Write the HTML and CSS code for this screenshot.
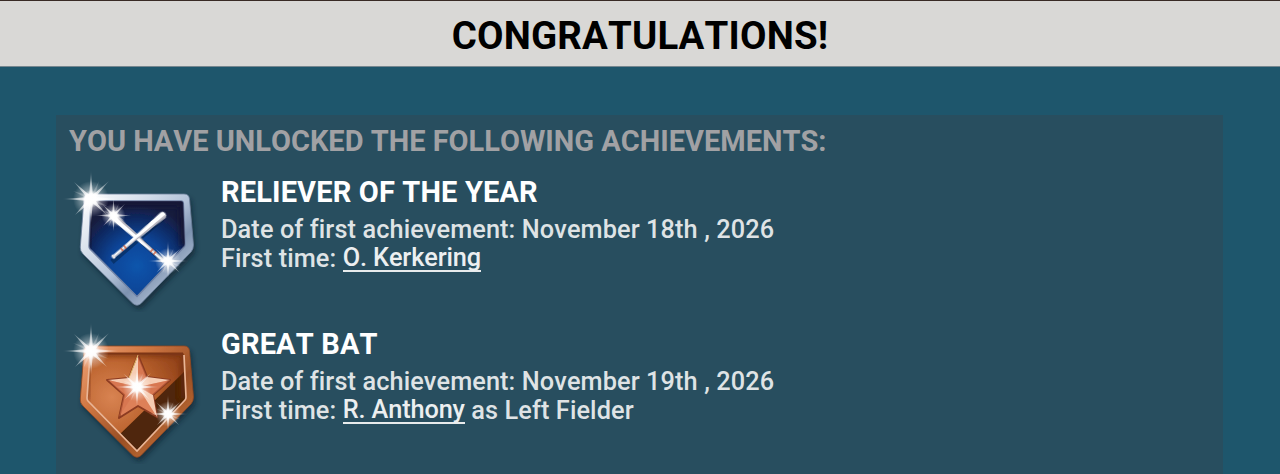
FILE: index.html
```html
<!DOCTYPE html>
<html lang="en">
<head>
    <meta charset="UTF-8">
    <meta name="viewport" content="width=device-width, initial-scale=1.0">
    <title>Congratulations!</title>
    <link rel="stylesheet" href="styles.css">
</head>
<body>

<!-- shapes shared by both badges -->
<svg class="defs" width="0" height="0">
    <defs>
        <linearGradient id="silver" x1="0" y1="0" x2="1" y2="1">
            <stop offset="0" stop-color="#ffffff"/>
            <stop offset=".3" stop-color="#d5deeb"/>
            <stop offset=".5" stop-color="#b3c2d8"/>
            <stop offset=".65" stop-color="#7d92b0"/>
            <stop offset="1" stop-color="#dce6f4"/>
        </linearGradient>
        <radialGradient id="blue" cx=".5" cy=".68" r=".65">
            <stop offset="0" stop-color="#0b55ac"/>
            <stop offset=".45" stop-color="#084496"/>
            <stop offset=".8" stop-color="#10265c"/>
            <stop offset="1" stop-color="#181d3c"/>
        </radialGradient>
        <linearGradient id="copper" x1="0" y1="0" x2="1" y2="1">
            <stop offset="0" stop-color="#f0a47a"/>
            <stop offset=".3" stop-color="#d17843"/>
            <stop offset=".6" stop-color="#9a4f25"/>
            <stop offset=".75" stop-color="#b0602e"/>
            <stop offset="1" stop-color="#8a441c"/>
        </linearGradient>
        <radialGradient id="bronze" cx=".25" cy=".45" r=".75">
            <stop offset="0" stop-color="#d88352"/>
            <stop offset=".5" stop-color="#bd6530"/>
            <stop offset="1" stop-color="#94441a"/>
        </radialGradient>
        <radialGradient id="glow">
            <stop offset="0" stop-color="#fff"/>
            <stop offset=".3" stop-color="#fff" stop-opacity=".9"/>
            <stop offset=".5" stop-color="#fff" stop-opacity=".4"/>
            <stop offset="1" stop-color="#fff" stop-opacity="0"/>
        </radialGradient>
        <radialGradient id="ray" gradientUnits="userSpaceOnUse" cx="0" cy="0" r="28">
            <stop offset="0" stop-color="#fff"/>
            <stop offset=".4" stop-color="#fff" stop-opacity=".7"/>
            <stop offset="1" stop-color="#fff" stop-opacity=".05"/>
        </radialGradient>
        <filter id="soft" x="-20%" y="-20%" width="140%" height="140%">
            <feGaussianBlur stdDeviation="2.5"/>
        </filter>
        <filter id="smooth" x="-10%" y="-10%" width="120%" height="120%">
            <feGaussianBlur stdDeviation=".6"/>
        </filter>
        <path id="outer" d="M39 34H134Q139 34 139.500 39L143.500 85Q143.500 89 141 92L91 143.500Q87 147 83 143.500L33 94Q30 91 30.300 87L34 39Q34.500 34 39 34Z"/>
        <path id="inner" d="M43 41H131Q133 41 133.300 43L135 84Q135 86 134 87L87 136.500L40 89Q39 88 39 86L41 43Q41 41 43 41Z"/>
        <path id="plate" d="M42 41H132Q134 41 134 43L136 85Q136 87 135 88L87 139L38 89Q37 88 37 86L40 43Q40 41 42 41Z"/>
        <clipPath id="face"><use href="#inner"/></clipPath>
        <clipPath id="plate-face"><use href="#plate"/></clipPath>
        <g id="sparkle" filter="url(#smooth)">
            <circle r="18" fill="url(#glow)"/>
            <path fill="url(#ray)" d="M0-28 1.800-4.300 18-18 4.300-1.800 28 0 4.300 1.800 16 16 1.800 4.300 0 24-1.800 4.300-16 16-4.300 1.800-28 0-4.300-1.800-17-17-1.800-4.300Z"/>
            <path fill="url(#ray)" d="M-8-18 0-3 8-18 3 0 18 8 0 3-8 18-3 0-18-8 0-3Z" opacity=".35"/>
        </g>
        <g id="bat">
            <path d="M0-3.500Q3.600-3.500 3.500 0L2.500 25 1.500 50V63H-1.500V50L-2.500 25-3.500 0Q-3.600-3.500 0-3.500Z" fill="#fff"/>
            <path d="M1.200-3Q3.600-3 3.500 0L2.500 25 1.500 50V63H.5V50L1 25Z" fill="#b4b1bb"/>
            <path d="M-2 49H2M-2 53H2" stroke="#d0603f" stroke-width="1.600"/>
            <path d="M-.8 64H.8" stroke="#e8e4e6" stroke-width="3" stroke-linecap="round"/>
        </g>
    </defs>
</svg>

<header>
    <h1>CONGRATULATIONS!</h1>
</header>

<main class="panel">
    <h2 class="panel-title">YOU HAVE UNLOCKED THE FOLLOWING ACHIEVEMENTS:</h2>

    <section class="achievement">
        <svg class="badge" viewBox="6 0 152 152">
            <use href="#outer" x="2" y="4" fill="#0b1f2b" opacity=".6" filter="url(#soft)"/>
            <g filter="url(#smooth)">
                <use href="#outer" fill="url(#silver)" stroke="#6d819d" stroke-width=".8"/>
                <use href="#inner" fill="url(#blue)" stroke="#7183a6" stroke-width="1.500"/>
            </g>
            <g clip-path="url(#face)">
                <path d="M41 41H134L136 86" fill="none" stroke="#141936" stroke-width="12" opacity=".8" filter="url(#soft)"/>
                <path d="M41 41 38 88" fill="none" stroke="#141936" stroke-width="8" opacity=".6" filter="url(#soft)"/>
            </g>
            <path d="M66 58 113 101M114 57 62 102" stroke="#05132f" stroke-width="5" opacity=".4" filter="url(#smooth)"/>
            <use href="#bat" transform="translate(65 58) rotate(-48.500)" filter="url(#smooth)"/>
            <use href="#bat" transform="translate(112.500 55.500) rotate(50)" filter="url(#smooth)"/>
            <use href="#sparkle" transform="translate(41 39)"/>
            <use href="#sparkle" transform="translate(63.500 55.500) scale(.66)"/>
            <use href="#sparkle" transform="translate(118 101) scale(.72)"/>
        </svg>
        <div class="info">
            <h3>RELIEVER OF THE YEAR</h3>
            <p>Date of first achievement: November 18th , 2026</p>
            <p>First time: <a href="#">O. Kerkering</a></p>
        </div>
    </section>

    <section class="achievement">
        <svg class="badge" viewBox="6 0 152 152">
            <use href="#outer" x="2" y="4" fill="#0b1f2b" opacity=".6" filter="url(#soft)"/>
            <g filter="url(#smooth)">
                <use href="#outer" fill="url(#copper)" stroke="#92481f" stroke-width=".8"/>
                <use href="#plate" fill="url(#bronze)"/>
                <g clip-path="url(#plate-face)">
                    <path d="M140 54 68 124 87 142 140 88Z" fill="#502507"/>
                    <path d="M40 41H134V86" fill="none" stroke="#6b2c0c" stroke-width="7" opacity=".6" filter="url(#soft)"/>
                    <path d="M40 41 37 88" stroke="#7c3512" stroke-width="5" opacity=".6" filter="url(#soft)"/>
                </g>
                <path d="M134 43 136 85Q136 87 135 88L87 139 38 89Q37 88 37 86L40 43" fill="none" stroke="#e9b596" stroke-width="1.700"/>
                <path d="M41 41.500H133" stroke="#7c3512" stroke-width="1.800"/>
            </g>
            <g filter="url(#smooth)">
                <path d="M88 43 97 65 120 68 103 83 107 105 88 94 69 106 74 83 57 68 79 66Z" fill="#dd8058" stroke="#8c3b20" stroke-width="2" stroke-linejoin="round"/>
                <path d="M88 44V75L79 66ZM120 68 88 75 97 65ZM107 105 88 75 103 83ZM58 68 88 75 79 66Z" fill="#f6cdb4"/>
                <path d="M88 44V75L97 65ZM120 68 88 75 103 83ZM69 105 88 75 74 83ZM58 68 88 75 74 83Z" fill="#d4704c" opacity=".55"/>
                <path d="M79 66 88 43" stroke="#e0b868" stroke-width="1"/>
            </g>
            <use href="#sparkle" transform="translate(41 39)"/>
            <use href="#sparkle" transform="translate(87 75) scale(.8)"/>
            <use href="#sparkle" transform="translate(118 102) scale(.7)"/>
        </svg>
        <div class="info">
            <h3>GREAT BAT</h3>
            <p>Date of first achievement: November 19th , 2026</p>
            <p>First time: <a href="#">R. Anthony</a> as Left Fielder</p>
        </div>
    </section>
</main>

</body>
</html>
```
FILE: styles.css
```css
body {
    margin: 0;
    height: 474px;
    overflow: hidden;
    background: #1e566c;
    font-family: Roboto, "Liberation Sans", sans-serif;
    font-kerning: none;
}

.defs {
    position: absolute;
}

header {
    box-sizing: border-box;
    height: 67px;
    border-top: 1px solid #382a25;
    border-bottom: 1px solid #75868f;
    background: #d9d8d6;
    text-align: center;
}

h1 {
    margin: 0;
    padding-top: 3px;
    font-size: 38.4px;
    font-weight: 700;
    letter-spacing: 0.2px;
    line-height: 64px;
    color: #000;
}

.panel {
    width: 1167px;
    height: 359px;
    margin: 48px 0 0 56px;
    background: #284e5f;
}

.panel-title {
    height: 45px;
    margin: 0;
    padding-left: 13px;
    font-size: 29px;
    font-weight: 700;
    line-height: 52px;
    color: #a1a1a4;
}

.achievement {
    display: flex;
    gap: 13px;
    height: 152px;
}

.badge {
    flex: none;
    width: 152px;
    height: 152px;
}

.info {
    padding-top: 13px;
    white-space: nowrap;
}

.info h3 {
    margin: 0 0 5px;
    font-size: 29px;
    font-weight: 700;
    letter-spacing: 0.15px;
    line-height: 38px;
    color: #fff;
}

.info p {
    margin: 0;
    font-size: 25.3px;
    font-weight: 500;
    letter-spacing: 0.1px;
    line-height: 28.6px;
    color: #dfe3e5;
}

.info a {
    display: inline-block;
    height: 26px;
    margin-top: -1px;
    border-bottom: 2px solid #e8ebec;
    letter-spacing: -0.12px;
    line-height: 28px;
    color: #eceff0;
    text-decoration: none;
    vertical-align: top;
}
```
